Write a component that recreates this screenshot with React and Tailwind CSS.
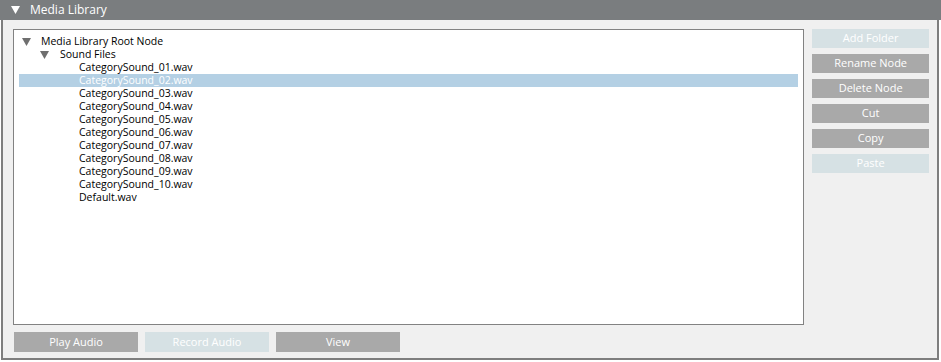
const files = [
  'CategorySound_01.wav',
  'CategorySound_02.wav',
  'CategorySound_03.wav',
  'CategorySound_04.wav',
  'CategorySound_05.wav',
  'CategorySound_06.wav',
  'CategorySound_07.wav',
  'CategorySound_08.wav',
  'CategorySound_09.wav',
  'CategorySound_10.wav',
  'Default.wav',
];

function Tri({ className = '' }) {
  return (
    <svg width="9" height="8" viewBox="0 0 9 8" className={className}>
      <path d="M0 0h9L4.5 8z" fill="currentColor" />
    </svg>
  );
}

function Btn({ children, disabled, className = '' }) {
  return (
    <div
      className={`flex h-[19px] items-center justify-center text-[11px] text-white ${
        disabled ? 'bg-[#d6e1e4]' : 'bg-[#a9a9a9]'
      } ${className}`}
    >
      {children}
    </div>
  );
}

export default function App() {
  return (
    <div className="h-[362px] w-[941px] bg-white font-['Open_Sans',sans-serif]">
      {/* Header */}
      <div className="flex h-[20px] items-center bg-[#7a7d7f] pl-[11px] text-[12px] text-white">
        <Tri className="mr-[10px] text-white" />
        <span>Media Library</span>
      </div>

      <div className="ml-[1px] mr-[2px] h-[340px] border-x-2 border-b-2 border-[#7e7e7e] bg-[#f0f0f0] pl-[10px] pr-[8px] pt-[9px]">
        <div className="flex gap-[8px]">
          {/* Tree */}
          <div className="h-[296px] w-[793px] border border-[#828282] bg-white pl-[5px] pr-[5px] pt-[5px] text-[10.5px] leading-[13px] text-black">
            <div className="flex items-center">
              <Tri className="ml-[3px] mr-[10px] text-[#6f6f6f]" />
              <span>Media Library Root Node</span>
            </div>
            <div className="flex items-center">
              <Tri className="ml-[21px] mr-[11px] text-[#6f6f6f]" />
              <span>Sound Files</span>
            </div>
            {files.map((f, i) => (
              <div
                key={f}
                className={`pl-[60px] ${i === 1 ? 'bg-[#b4d0e4] text-white' : ''}`}
              >
                {f}
              </div>
            ))}
          </div>

          {/* Side buttons */}
          <div className="flex w-[117px] flex-col gap-[6px]">
            <Btn disabled>Add Folder</Btn>
            <Btn>Rename Node</Btn>
            <Btn>Delete Node</Btn>
            <Btn>Cut</Btn>
            <Btn>Copy</Btn>
            <Btn disabled>Paste</Btn>
          </div>
        </div>

        {/* Bottom buttons */}
        <div className="mt-[7px] flex gap-[7px] pl-[1px]">
          <Btn className="h-[20px] w-[124px]">Play Audio</Btn>
          <Btn disabled className="h-[20px] w-[124px]">Record Audio</Btn>
          <Btn className="h-[20px] w-[124px]">View</Btn>
        </div>
      </div>
    </div>
  );
}
